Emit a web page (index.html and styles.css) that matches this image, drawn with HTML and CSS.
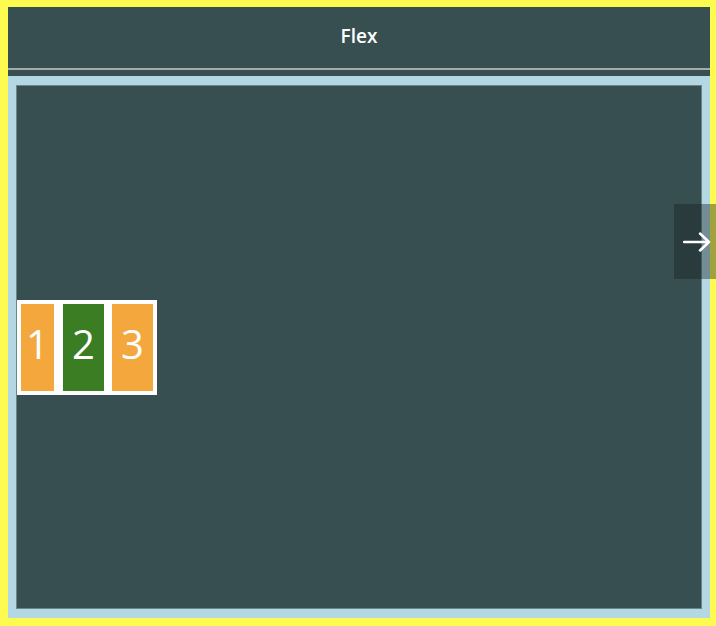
FILE: index.html
```html
<!DOCTYPE html>
<html>
<head>
<meta charset="utf-8">
<link rel="stylesheet" href="styles.css">
</head>
<body>
<div class="frame">
  <div class="header"><span class="title">Flex</span></div>
  <div class="rule"></div>
  <div class="gap"></div>
  <div class="panel">
    <div class="stage">
      <div class="flexbox">
        <div class="item orange narrow">1</div>
        <div class="item green wide-gap">2</div>
        <div class="item orange">3</div>
      </div>
    </div>
  </div>
  <div class="next">
    <svg width="28" height="20" viewBox="0 0 28 20"><path d="M1 10 H26 M17 1.5 L26 10 L17 18.5" fill="none" stroke="#fff" stroke-width="2.5" stroke-linecap="round" stroke-linejoin="round"/></svg>
  </div>
</div>
</body>
</html>
```
FILE: styles.css
```css
html, body { margin: 0; padding: 0; }
body { font-family: "Open Sans", "Noto Sans", sans-serif; }
.frame {
  position: relative;
  width: 716px;
  height: 626px;
  box-sizing: border-box;
  background: #fdfb50;
  padding: 7px 6px 8px 8px;
  display: flex;
  flex-direction: column;
  overflow: hidden;
}
.header {
  height: 61px;
  background: #374f50;
  display: flex;
  align-items: center;
  justify-content: center;
}
.title {
  color: #fff;
  font-weight: 600;
  font-size: 19px;
  margin-top: -3px;
}
.rule { height: 2px; background: #a4abaa; }
.gap { height: 6px; background: #374f50; }
.panel {
  flex: 1;
  background: #b3d7e3;
  padding: 9px 8px 9px 8px;
  display: flex;
}
.stage {
  flex: 1;
  background: #374f50;
  border: 1px solid #6c8686;
  display: flex;
  align-items: center;
}
.flexbox {
  background: #fff;
  display: flex;
  gap: 8px;
  padding: 4px;
}
.item {
  width: 41px;
  height: 87px;
  box-sizing: border-box;
  padding-bottom: 8px;
  color: #fff;
  font-size: 40px;
  font-weight: 400;
  display: flex;
  align-items: center;
  justify-content: center;
}
.item.narrow { width: 33px; }
.item.wide-gap { margin-left: 1px; }
.orange { background: #f3a73c; }
.green { background: #3a7d22; }
.next {
  position: absolute;
  left: 674px;
  top: 204px;
  width: 44px;
  height: 75px;
  background: rgba(20, 30, 30, 0.4);
  display: flex;
  align-items: center;
  padding-left: 9px;
  box-sizing: border-box;
}
```
